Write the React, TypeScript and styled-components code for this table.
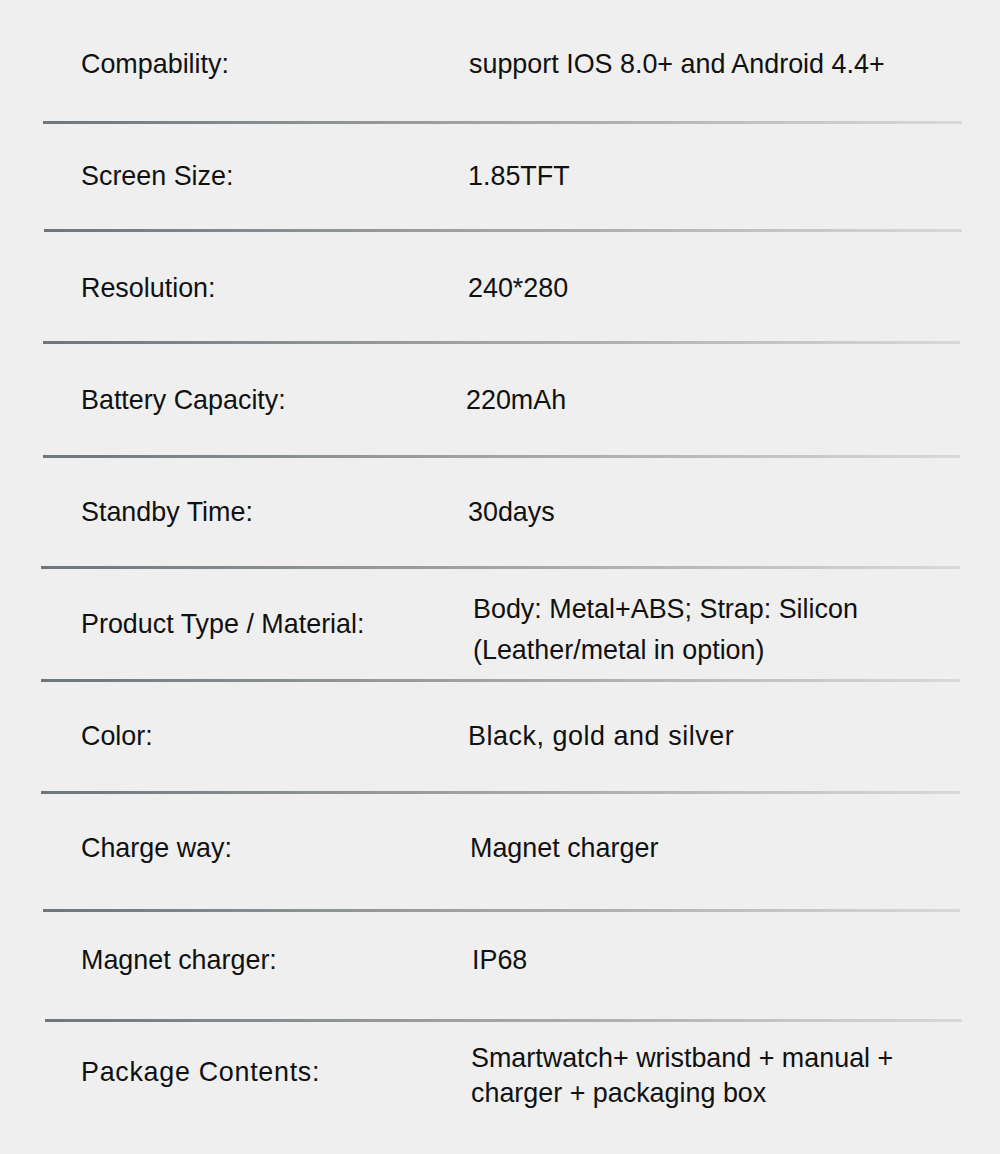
import styled, { createGlobalStyle } from "styled-components";

const GlobalStyle = createGlobalStyle`
  html, body {
    margin: 0;
    padding: 0;
    background: #efefef;
  }
`;

const Sheet = styled.div`
  width: 1000px;
  height: 1154px;
  background: #efefef;
  font-family: "Liberation Sans", Arial, sans-serif;
  font-size: 26.9px;
  color: #111;
  display: flex;
  flex-direction: column;
  overflow: hidden;
`;

const Row = styled.div<{ $h: number; $shift: number }>`
  height: ${(p) => p.$h}px;
  box-sizing: border-box;
  display: grid;
  grid-template-columns: 387px 1fr;
  align-items: center;
  padding-left: 81px;
  padding-top: ${(p) => (p.$shift > 0 ? p.$shift * 2 : 0)}px;
  padding-bottom: ${(p) => (p.$shift < 0 ? -p.$shift * 2 : 0)}px;
  flex-shrink: 0;
`;

const Label = styled.div<{ $ls?: number }>`
  white-space: nowrap;
  letter-spacing: ${(p) => p.$ls ?? 0}px;
`;

const Value = styled.div<{ $nudge?: number; $lh?: number; $ls?: number; $drop?: number }>`
  margin-left: ${(p) => p.$nudge ?? 0}px;
  margin-top: ${(p) => (p.$drop ?? 0) * 2}px;
  line-height: ${(p) => p.$lh ?? 31}px;
  letter-spacing: ${(p) => p.$ls ?? 0}px;
`;

const Divider = styled.div<{ $left: number; $right: number }>`
  height: 3px;
  flex-shrink: 0;
  margin-left: ${(p) => p.$left}px;
  width: ${(p) => p.$right - p.$left}px;
  background: linear-gradient(90deg, #6c777c 0%, #8d9294 30%, #a9a9a9 55%, #c4c4c4 80%, #d9d9d9 100%);
`;

type Spec = {
  label: string;
  value: string[];
  h: number;
  shift: number;
  nudge: number;
  lh?: number;
  drop?: number;
  labelLs?: number;
  valueLs?: number;
  line?: [number, number];
};

const specs: Spec[] = [
  { label: "Compability:", value: ["support IOS 8.0+ and Android 4.4+"], h: 121, shift: 3.5, nudge: 1, line: [43, 962] },
  { label: "Screen Size:", value: ["1.85TFT"], h: 105, shift: 0, nudge: 0, line: [44, 962] },
  { label: "Resolution:", value: ["240*280"], h: 109, shift: 1.5, nudge: 0, line: [43, 960] },
  { label: "Battery Capacity:", value: ["220mAh"], h: 111, shift: 0.5, nudge: -2, line: [43, 960] },
  { label: "Standby Time:", value: ["30days"], h: 108, shift: 0, nudge: 0, line: [41, 960] },
  {
    label: "Product Type / Material:",
    value: ["Body: Metal+ABS; Strap: Silicon", "(Leather/metal in option)"],
    h: 110,
    shift: 0,
    nudge: 5,
    lh: 41,
    drop: 6,
    line: [41, 960],
  },
  { label: "Color:", value: ["Black, gold and silver"], h: 109, shift: -0.5, nudge: 0, valueLs: 0.55, line: [41, 960] },
  { label: "Charge way:", value: ["Magnet charger"], h: 115, shift: -3.5, nudge: 2, line: [43, 960] },
  { label: "Magnet charger:", value: ["IP68"], h: 107, shift: -5.5, nudge: 4, line: [45, 962] },
  {
    label: "Package Contents:",
    value: ["Smartwatch+ wristband + manual +", "charger + packaging box"],
    h: 132,
    shift: -16,
    nudge: 3,
    lh: 35,
    drop: 4,
    labelLs: 0.7,
  },
];

export default function App() {
  return (
    <>
      <GlobalStyle />
      <Sheet>
        {specs.map((s) => (
          <div key={s.label} style={{ display: "contents" }}>
            <Row $h={s.h} $shift={s.shift}>
              <Label $ls={s.labelLs}>{s.label}</Label>
              <Value $nudge={s.nudge} $lh={s.lh} $ls={s.valueLs} $drop={s.drop}>
                {s.value.map((line) => (
                  <div key={line}>{line}</div>
                ))}
              </Value>
            </Row>
            {s.line && <Divider $left={s.line[0]} $right={s.line[1]} />}
          </div>
        ))}
      </Sheet>
    </>
  );
}
